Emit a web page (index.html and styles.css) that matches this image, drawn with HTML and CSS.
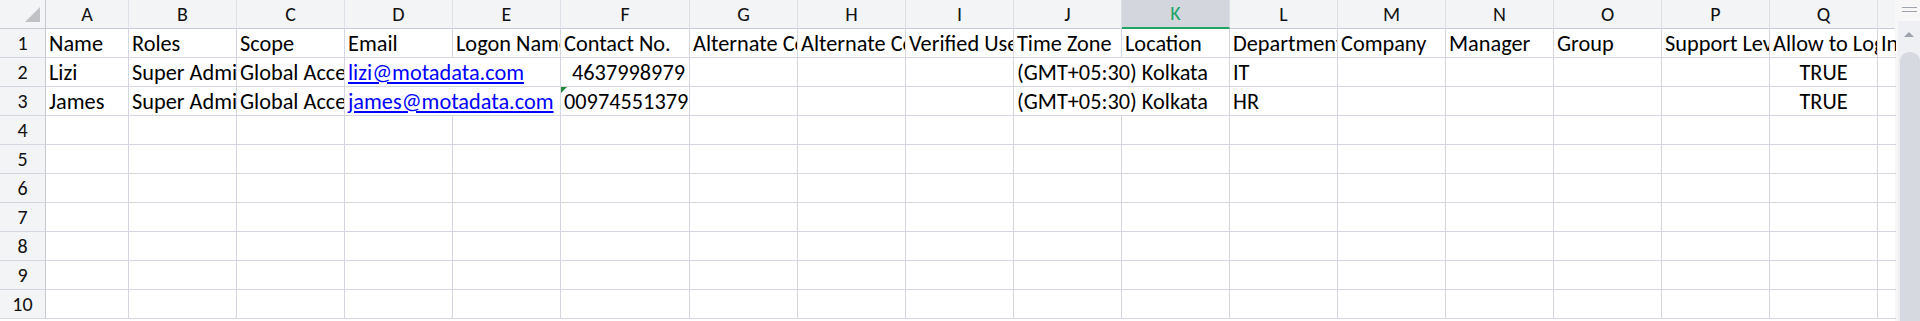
FILE: index.html
```html
<!DOCTYPE html>
<html>
<head>
<meta charset="utf-8">
<link rel="stylesheet" href="styles.css">
</head>
<body>
<div class="sheet">
  <div class="grid">
    <div class="corner"><span class="tri"></span></div>
    <div class="ch">A</div><div class="ch">B</div><div class="ch">C</div><div class="ch">D</div><div class="ch">E</div><div class="ch">F</div><div class="ch">G</div><div class="ch">H</div><div class="ch">I</div><div class="ch">J</div><div class="ch sel">K</div><div class="ch">L</div><div class="ch">M</div><div class="ch">N</div><div class="ch">O</div><div class="ch">P</div><div class="ch">Q</div><div class="ch"></div>

    <div class="rh">1</div>
    <div class="c">Name</div><div class="c">Roles</div><div class="c">Scope</div><div class="c">Email</div><div class="c">Logon Name</div><div class="c">Contact No.</div><div class="c">Alternate Contact No.</div><div class="c">Alternate Contact No. 2</div><div class="c">Verified User</div><div class="c">Time Zone</div><div class="c">Location</div><div class="c">Department</div><div class="c">Company</div><div class="c">Manager</div><div class="c">Group</div><div class="c">Support Level</div><div class="c">Allow to Login</div><div class="c last">Internal</div>

    <div class="rh">2</div>
    <div class="c">Lizi</div><div class="c">Super Admin</div><div class="c">Global Access</div><div class="c span2"><a class="link">lizi@motadata.com</a></div><div class="c num">4637998979</div><div class="c"></div><div class="c"></div><div class="c"></div><div class="c span2">(GMT+05:30) Kolkata</div><div class="c">IT</div><div class="c"></div><div class="c"></div><div class="c"></div><div class="c"></div><div class="c mid">TRUE</div><div class="c last"></div>

    <div class="rh">3</div>
    <div class="c">James</div><div class="c">Super Admin</div><div class="c">Global Access</div><div class="c span2"><a class="link">james@motadata.com</a></div><div class="c flag">00974551379</div><div class="c"></div><div class="c"></div><div class="c"></div><div class="c span2">(GMT+05:30) Kolkata</div><div class="c">HR</div><div class="c"></div><div class="c"></div><div class="c"></div><div class="c"></div><div class="c mid">TRUE</div><div class="c last"></div>

    <div class="rh">4</div><div class="c"></div><div class="c"></div><div class="c"></div><div class="c"></div><div class="c"></div><div class="c"></div><div class="c"></div><div class="c"></div><div class="c"></div><div class="c"></div><div class="c"></div><div class="c"></div><div class="c"></div><div class="c"></div><div class="c"></div><div class="c"></div><div class="c"></div><div class="c last"></div>
    <div class="rh">5</div><div class="c"></div><div class="c"></div><div class="c"></div><div class="c"></div><div class="c"></div><div class="c"></div><div class="c"></div><div class="c"></div><div class="c"></div><div class="c"></div><div class="c"></div><div class="c"></div><div class="c"></div><div class="c"></div><div class="c"></div><div class="c"></div><div class="c"></div><div class="c last"></div>
    <div class="rh">6</div><div class="c"></div><div class="c"></div><div class="c"></div><div class="c"></div><div class="c"></div><div class="c"></div><div class="c"></div><div class="c"></div><div class="c"></div><div class="c"></div><div class="c"></div><div class="c"></div><div class="c"></div><div class="c"></div><div class="c"></div><div class="c"></div><div class="c"></div><div class="c last"></div>
    <div class="rh">7</div><div class="c"></div><div class="c"></div><div class="c"></div><div class="c"></div><div class="c"></div><div class="c"></div><div class="c"></div><div class="c"></div><div class="c"></div><div class="c"></div><div class="c"></div><div class="c"></div><div class="c"></div><div class="c"></div><div class="c"></div><div class="c"></div><div class="c"></div><div class="c last"></div>
    <div class="rh">8</div><div class="c"></div><div class="c"></div><div class="c"></div><div class="c"></div><div class="c"></div><div class="c"></div><div class="c"></div><div class="c"></div><div class="c"></div><div class="c"></div><div class="c"></div><div class="c"></div><div class="c"></div><div class="c"></div><div class="c"></div><div class="c"></div><div class="c"></div><div class="c last"></div>
    <div class="rh">9</div><div class="c"></div><div class="c"></div><div class="c"></div><div class="c"></div><div class="c"></div><div class="c"></div><div class="c"></div><div class="c"></div><div class="c"></div><div class="c"></div><div class="c"></div><div class="c"></div><div class="c"></div><div class="c"></div><div class="c"></div><div class="c"></div><div class="c"></div><div class="c last"></div>
    <div class="rh">10</div><div class="c"></div><div class="c"></div><div class="c"></div><div class="c"></div><div class="c"></div><div class="c"></div><div class="c"></div><div class="c"></div><div class="c"></div><div class="c"></div><div class="c"></div><div class="c"></div><div class="c"></div><div class="c"></div><div class="c"></div><div class="c"></div><div class="c"></div><div class="c last"></div>
  </div>
  <div class="vscroll">
    <div class="grip"><span></span><span></span></div>
    <div class="track">
      <div class="arrow"></div>
      <div class="thumb"></div>
    </div>
  </div>
</div>
</body>
</html>
```
FILE: styles.css
```css
html, body {
  margin: 0;
  padding: 0;
  background: #ffffff;
  overflow: hidden;
}
.sheet {
  display: flex;
  width: 1920px;
  height: 321px;
  font-family: Calibri, Carlito, "Open Sans", "Noto Sans", sans-serif;
  font-size: 22.3px;
  color: #000;
}
.grid {
  display: grid;
  grid-template-columns: 46px 83px repeat(4, 108px) 129px repeat(11, 108px) 18px;
  grid-template-rows: 29px repeat(10, 29px);
  width: 1895px;
  flex: none;
  align-content: start;
}
.grid > div {
  box-sizing: border-box;
  border-right: 1px solid #d4d7df;
  border-bottom: 1px solid #d4d7df;
  white-space: nowrap;
  overflow: hidden;
  min-width: 0;
}
.corner {
  background: #f3f4f6;
  position: relative;
  border-right-color: #c6cad3 !important;
  border-bottom-color: #c6cad3 !important;
}
.tri {
  position: absolute;
  left: 25px;
  top: 7px;
  width: 0;
  height: 0;
  border-left: 15px solid transparent;
  border-bottom: 15px solid #bfc1c4;
}
.ch {
  background: #f3f4f6;
  text-align: center;
  font-size: 20px;
  line-height: 28px;
  color: #111;
  border-right-color: #dde0e6 !important;
  border-bottom-color: #c6cad3 !important;
}
.ch.sel {
  background: #d3d6dd;
  color: #21a366;
  border-bottom: 2px solid #21a366 !important;
  line-height: 27px;
}
.rh {
  background: #f3f4f6;
  text-align: center;
  font-size: 20px;
  line-height: 28px;
  color: #111;
  border-right-color: #c6cad3 !important;
  border-bottom-color: #d4d7df !important;
}
.c {
  padding: 0 3px;
  line-height: 30px;
  position: relative;
}
.c.last {
  border-right: none !important;
}
.span2 {
  grid-column: span 2;
}
.num {
  text-align: right;
  padding-right: 4px;
}
.mid {
  text-align: center;
}
.link {
  color: #0000ff;
  text-decoration: underline;
  text-underline-offset: 2px;
}
.flag::before {
  content: "";
  position: absolute;
  left: 0;
  top: 0;
  width: 0;
  height: 0;
  border-top: 6px solid #1f8a3b;
  border-right: 6px solid transparent;
}
.vscroll {
  flex: 1;
  display: flex;
  flex-direction: column;
  background: #f7f7f8;
}
.grip {
  height: 21px;
  display: flex;
  flex-direction: column;
  align-items: flex-end;
  padding: 7px 3px 0 0;
  box-sizing: border-box;
  gap: 3px;
}
.grip span {
  display: block;
  width: 15px;
  height: 1px;
  background: #9ea3ad;
}
.track {
  flex: 1;
  margin-left: 3px;
  background: #eef0f3;
  display: flex;
  flex-direction: column;
  align-items: center;
}
.arrow {
  margin-top: 11px;
  width: 0;
  height: 0;
  border-left: 5px solid transparent;
  border-right: 5px solid transparent;
  border-bottom: 5px solid #9ea3ad;
}
.thumb {
  margin-top: 15px;
  align-self: stretch;
  margin-left: 2px;
  flex: 1;
  background: #d6d9e0;
  border-radius: 9px 9px 0 0;
}
```
